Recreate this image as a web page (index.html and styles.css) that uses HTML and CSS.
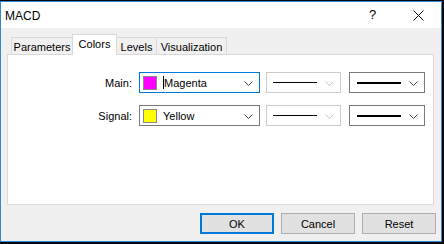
FILE: index.html
```html
<!DOCTYPE html>
<html lang="en">
<head>
  <meta charset="UTF-8" />
  <title>MACD</title>
  <link rel="stylesheet" href="styles.css">
</head>
<body>
  <div class="window">
    <div class="titlebar">
      <span class="title">MACD</span>
      <span class="help">?</span>
      <span class="close">
        <svg width="11" height="11" viewBox="0 0 11 11"><path d="M0.5 0.5 L10.5 10.5 M10.5 0.5 L0.5 10.5" stroke="#111" stroke-width="1" fill="none"/></svg>
      </span>
    </div>

    <div class="content">
      <div class="tabs">
        <div class="tab tab-params">Parameters</div>
        <div class="tab active">Colors</div>
        <div class="tab tab-levels">Levels</div>
        <div class="tab tab-vis">Visualization</div>
      </div>

      <div class="panel">
        <div class="row">
          <label class="label">Main:</label>
          <div class="combo color-combo focused">
            <span class="swatch magenta"></span>
            <span class="combo-text"><span class="caret"></span>Magenta</span>
            <svg class="chev" width="9" height="5" viewBox="0 0 9 5"><polyline points="0.5,0.5 4.5,4.5 8.5,0.5" fill="none" stroke="#444" stroke-width="1"/></svg>
          </div>
          <div class="combo line-combo disabled">
            <span class="line thin"></span>
            <svg class="chev" width="9" height="5" viewBox="0 0 9 5"><polyline points="0.5,0.5 4.5,4.5 8.5,0.5" fill="none" stroke="#c4c4c4" stroke-width="1"/></svg>
          </div>
          <div class="combo line-combo">
            <span class="line thick"></span>
            <svg class="chev" width="9" height="5" viewBox="0 0 9 5"><polyline points="0.5,0.5 4.5,4.5 8.5,0.5" fill="none" stroke="#444" stroke-width="1"/></svg>
          </div>
        </div>

        <div class="row">
          <label class="label">Signal:</label>
          <div class="combo color-combo">
            <span class="swatch yellow"></span>
            <span class="combo-text">Yellow</span>
            <svg class="chev" width="9" height="5" viewBox="0 0 9 5"><polyline points="0.5,0.5 4.5,4.5 8.5,0.5" fill="none" stroke="#444" stroke-width="1"/></svg>
          </div>
          <div class="combo line-combo disabled">
            <span class="line thin"></span>
            <svg class="chev" width="9" height="5" viewBox="0 0 9 5"><polyline points="0.5,0.5 4.5,4.5 8.5,0.5" fill="none" stroke="#c4c4c4" stroke-width="1"/></svg>
          </div>
          <div class="combo line-combo">
            <span class="line thick"></span>
            <svg class="chev" width="9" height="5" viewBox="0 0 9 5"><polyline points="0.5,0.5 4.5,4.5 8.5,0.5" fill="none" stroke="#444" stroke-width="1"/></svg>
          </div>
        </div>
      </div>

      <div class="buttons">
        <button class="btn default">OK</button>
        <button class="btn">Cancel</button>
        <button class="btn">Reset</button>
      </div>
    </div>
  </div>
</body>
</html>
```

FILE: styles.css
```css
body {
  margin: 0;
  padding: 0;
  background-color: #07070c;
  font-family: 'Liberation Sans', Arial, sans-serif;
  font-size: 11px;
  color: #000;
  overflow: hidden;
}

.window {
  margin-top: 1px;
  width: 442px;
  height: 241px;
  box-sizing: border-box;
  border: 1px solid #2d88d6;
  background: #f0f0f0;
  display: flex;
  flex-direction: column;
}

/* barra de titulo */
.titlebar {
  height: 26px;
  background: #fff;
  display: flex;
  align-items: center;
  position: relative;
}

.title {
  font-size: 12px;
  margin-left: 4px;
  margin-top: 1px;
}

.help {
  position: absolute;
  left: 368px;
  top: 5px;
  font-size: 13px;
}

.close {
  position: absolute;
  left: 412px;
  top: 8px;
  line-height: 0;
}

.content {
  flex: 1;
  padding: 6px 0 0 6px;
}

/* pestañas */
.tabs {
  display: flex;
  align-items: flex-end;
  height: 20px;
  padding-left: 5px;
  position: relative;
  z-index: 1;
}

.tab {
  height: 17px;
  box-sizing: border-box;
  border: 1px solid #d9d9d9;
  border-bottom: none;
  margin-left: -1px;
  background: #f0f0f0;
  display: flex;
  align-items: center;
  justify-content: center;
  padding-top: 1px;
}

.tab-params { width: 62px; }
.tab-levels { width: 41px; }
.tab-vis { width: 71px; }

.tab.active {
  width: 45px;
  height: 21px;
  background: #fff;
  margin-bottom: -1px;
  padding-bottom: 3px;
}

.panel {
  width: 427px;
  height: 151px;
  box-sizing: border-box;
  border: 1px solid #d9d9d9;
  background: #fff;
  padding-top: 17px;
}

.row {
  display: flex;
  align-items: center;
  margin-bottom: 12px;
}

.label {
  width: 124px;
  text-align: right;
  margin-right: 7px;
}

.combo {
  height: 21px;
  box-sizing: border-box;
  border: 1px solid #7a7a7a;
  background: #fff;
  display: flex;
  align-items: center;
  position: relative;
}

.combo .chev {
  position: absolute;
  right: 6px;
  top: 8px;
}

.color-combo {
  width: 121px;
  margin-right: 6px;
}

.color-combo.focused {
  border-color: #0078d7;
}

.swatch {
  width: 12px;
  height: 12px;
  border: 1px solid #8a8a8a;
  margin-left: 3px;
  margin-right: 6px;
}

.swatch.magenta { background: #ff00ff; }
.swatch.yellow { background: #ffff00; }

.caret {
  display: inline-block;
  width: 1px;
  height: 13px;
  background: #000;
  vertical-align: -2px;
}

.line-combo {
  width: 75px;
  margin-right: 8px;
}

.line-combo + .line-combo {
  width: 76px;
}

.line-combo.disabled {
  border-color: #cccccc;
}

.line {
  display: block;
  width: 44px;
  margin-left: 6px;
  background: #000;
}

.line.thin { height: 1px; }
.line.thick { height: 2px; margin-left: 7px; }

/* botones */
.buttons {
  display: flex;
  justify-content: flex-end;
  gap: 7px;
  padding-right: 5px;
  margin-top: 8px;
}

.btn {
  width: 74px;
  height: 21px;
  box-sizing: border-box;
  border: 1px solid #adadad;
  background: #e1e1e1;
  font-family: 'Liberation Sans', Arial, sans-serif;
  font-size: 11px;
  color: #000;
  padding: 0;
}

.btn.default {
  border: 2px solid #0078d7;
}
```
